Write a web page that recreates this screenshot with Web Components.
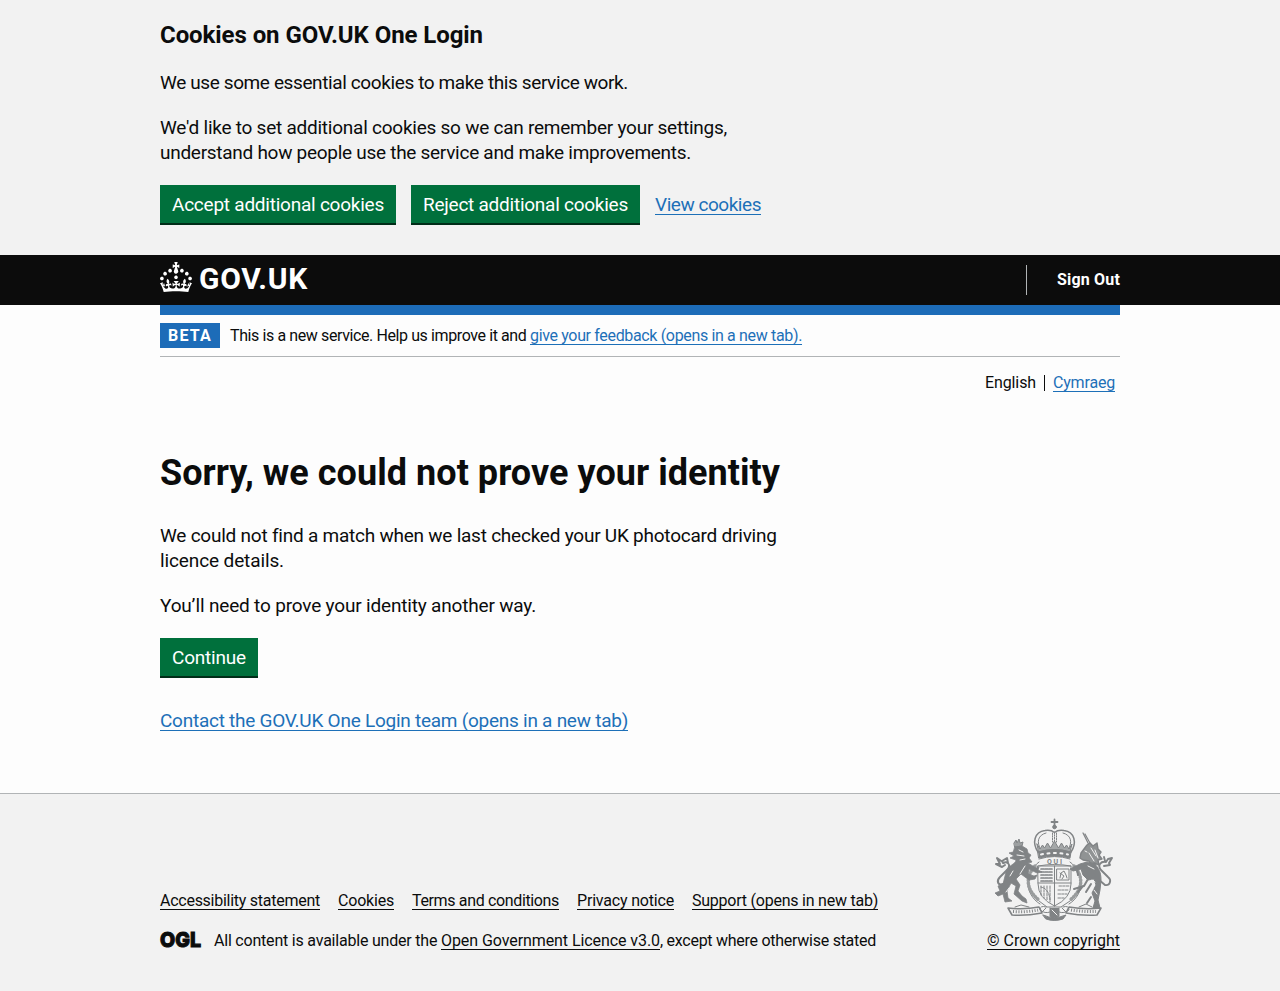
<!DOCTYPE html>
<html lang="en">
<head>
<meta charset="utf-8">
<title>Sorry, we could not prove your identity – GOV.UK One Login</title>
<style>
body{margin:0;background:#fdfdfd;color:#0b0c0c;font-family:Roboto,"Liberation Sans",sans-serif;font-size:19px;line-height:25px}
</style>
</head>
<body>
<one-login-page></one-login-page>
<script>
const define = (name, css, html, ready) => customElements.define(name, class extends HTMLElement {
  constructor() {
    super();
    this.attachShadow({mode: 'open'}).innerHTML = `<style>*{box-sizing:border-box}${css}</style>${html}`;
  }
  connectedCallback() { if (ready) ready.call(this, this.shadowRoot); }
});

// A single line of text, tracked so that it fills the width in its "w" attribute.
define('text-line', `
:host{display:inline-block;white-space:nowrap}
span{display:inline-block}
:host([link]) span{text-decoration:underline;text-decoration-thickness:1px;text-underline-offset:var(--offset,3px);text-decoration-skip-ink:none}
`, `<span><slot></slot></span>`, function (root) {
  const span = root.querySelector('span');
  const target = parseFloat(this.getAttribute('w'));
  const n = this.textContent.length;
  const natural = span.getBoundingClientRect().width;
  if (n && target) {
    span.style.letterSpacing = ((target - natural) / n).toFixed(4) + 'px';
    this.style.width = target + 'px';
  }
});

define('page-width', `:host{display:block;width:960px;margin:0 auto}`, `<slot></slot>`);

define('govuk-button', `
:host{display:block}
button{display:block;border:0;margin:0;padding:7px 12px 6px;height:38px;background:#00703c;color:#fff;font:inherit;line-height:25px;box-shadow:0 2px 0 #002d18}
`, `<button><slot></slot></button>`);

define('cookie-banner', `
:host{display:block;height:255px;background:#f2f2f2;padding-top:20px}
h2{margin:0 0 20px;font-size:24px;line-height:30px;font-weight:700;height:30px}
p{margin:0 0 20px;display:flex;flex-direction:column}
.actions{display:flex;gap:15px;align-items:center}
text-line[link]{color:#1d70b8}
`, `
<page-width>
<h2><text-line w="323">Cookies on GOV.UK One Login</text-line></h2>
<p><text-line w="468">We use some essential cookies to make this service work.</text-line></p>
<p><text-line w="567">We'd like to set additional cookies so we can remember your settings,</text-line>
<text-line w="531">understand how people use the service and make improvements.</text-line></p>
<div class="actions">
<govuk-button><text-line w="212">Accept additional cookies</text-line></govuk-button>
<govuk-button><text-line w="205">Reject additional cookies</text-line></govuk-button>
<text-line link w="106">View cookies</text-line>
</div>
</page-width>`);

define('govuk-logo', `
:host{display:flex;align-items:flex-start;color:#fff}
svg{display:block;width:32px;height:30px;margin-top:7px}
text-line{margin:5px 0 0 7px;font-size:30px;line-height:37px;font-weight:700}
`, `
<svg viewBox="0 0 32 30" fill="currentColor"><path d="M22.6 10.4c-1 .4-2-.1-2.4-1-.4-.9.1-2 1-2.4.9-.4 2 .1 2.4 1s-.1 2-1 2.4m-5.9 6.7c-.9.4-2-.1-2.4-1-.4-.9.1-2 1-2.4.9-.4 2 .1 2.4 1s-.1 2-1 2.4m10.8-3.7c-1 .4-2-.1-2.4-1-.4-.9.1-2 1-2.4.9-.4 2 .1 2.4 1s0 2-1 2.4m3.3 4.8c-1 .4-2-.1-2.4-1-.4-.9.1-2 1-2.4.9-.4 2 .1 2.4 1s-.1 2-1 2.4M17 4.7l2.3 1.2V2.5l-2.3.7-.2-.2.9-3h-3.4l.9 3-.2.2c-.1.1-2.3-.7-2.3-.7v3.4L15 4.7c.1.1.1.2.2.2l-1.3 4c-.1.2-.1.4-.1.6 0 1.1.8 2 1.9 2.2h.7c1-.2 1.9-1.1 1.9-2.1 0-.2 0-.4-.1-.6l-1.3-4c-.1-.2 0-.2.1-.3m-7.6 5.7c.9.4 2-.1 2.4-1 .4-.9-.1-2-1-2.4-.9-.4-2 .1-2.4 1s0 2 1 2.4m-5 3c.9.4 2-.1 2.4-1 .4-.9-.1-2-1-2.4-.9-.4-2 .1-2.4 1s.1 2 1 2.4m-3.2 4.8c.9.4 2-.1 2.4-1 .4-.9-.1-2-1-2.4-.9-.4-2 .1-2.4 1s0 2 1 2.4m14.8 11c4.4 0 8.6.3 12.3.8 1.1-4.5 2.4-7 3.7-8.8l-2.5-.9c.2 1.3.3 1.9 0 2.7-.4-.4-.8-1.1-1.1-2.3l-1.2 4c.7-.5 1.3-.8 2-.9-1.1 2.5-2.6 3.1-3.5 3-1.1-.2-1.7-1.2-1.5-2.1.3-1.2 1.5-1.5 2.1-.1 1.1-2.3-.8-3-2-2.3 1.9-1.9 2.1-3.5.6-5.6-2.1 1.6-2.1 3.2-1.2 5.5-1.2-1.4-3.2-.6-2.5 1.6.9-1.4 2.1-.5 1.9.8-.2 1.1-1.7 2.1-3.5 1.9-2.7-.2-2.9-2.1-2.9-3.6.7-.1 1.9.5 2.9 1.9l.4-4.3c-1.1 1.1-2.1 1.4-3.2 1.4.4-1.2 2.1-3 2.1-3h-5.4s1.7 1.9 2.1 3c-1.1 0-2.1-.2-3.2-1.4l.4 4.3c1-1.4 2.2-2 2.9-1.9-.1 1.5-.2 3.4-2.9 3.6-1.9.2-3.4-.8-3.5-1.9-.2-1.3 1-2.2 1.9-.8.7-2.3-1.2-3-2.5-1.6.9-2.2.9-3.9-1.2-5.5-1.5 2-1.3 3.7.6 5.6-1.2-.7-3.1 0-2 2.3.6-1.4 1.8-1.1 2.1.1.2.9-.3 1.9-1.5 2.1-.9.2-2.4-.5-3.5-3 .6 0 1.2.3 2 .9l-1.2-4c-.3 1.1-.7 1.9-1.1 2.3-.3-.8-.2-1.4 0-2.7l-2.9.9C1.3 23 2.6 25.5 3.7 30c3.7-.5 7.9-.8 12.3-.8"/></svg>
<text-line w="109">GOV.UK</text-line>`);

define('service-header', `
:host{display:block;height:60px;background:linear-gradient(#0c0c0c 50px,transparent 50px)}
.bar{display:flex;justify-content:space-between;height:60px;border-bottom:10px solid #1d6cb8}
nav{display:flex;align-items:center;height:30px;margin-top:10px;padding-left:30px;border-left:1px solid #b1b4b6;color:#fff;font-size:16px;font-weight:700;line-height:30px}
`, `
<page-width><div class="bar"><govuk-logo></govuk-logo><nav><text-line w="63">Sign Out</text-line></nav></div></page-width>`);

define('phase-banner', `
:host{display:flex;align-items:center;height:42px;border-bottom:1px solid #b1b4b6;font-size:16px;line-height:20px}
strong{background:#1d6cb8;color:#fff;width:60px;height:25px;margin-right:10px;padding:0 8px;line-height:26px}
.copy{display:flex}
text-line[link]{color:#1d70b8}
`, `<strong><text-line w="44">BETA</text-line></strong><div class="copy"><text-line w="300">This is a new service. Help us improve it and&nbsp;</text-line><text-line link w="272">give your feedback (opens in a new tab).</text-line></div>`);

define('language-select', `
:host{display:flex;justify-content:flex-end;align-items:center;height:20px;margin:16px 5px 0 0;font-size:16px;line-height:20px}
i{width:1px;height:16px;margin:0 8px;background:#0b0c0c}
text-line[link]{color:#1d70b8}
`, `<text-line w="51">English</text-line><i></i><text-line link w="62">Cymraeg</text-line>`);

define('main-content', `
:host{display:block;padding-top:60px;height:400px}
h1{margin:0 0 30px;height:40px;font-size:36px;line-height:40px;font-weight:700}
p{margin:0 0 20px;display:flex;flex-direction:column}
govuk-button{width:98px;margin-bottom:32px}
text-line[link]{color:#1d70b8}
`, `
<h1><text-line w="620">Sorry, we could not prove your identity</text-line></h1>
<p><text-line w="616">We could not find a match when we last checked your UK photocard driving</text-line><text-line w="124">licence details.</text-line></p>
<p><text-line w="376">You’ll need to prove your identity another way.</text-line></p>
<govuk-button><text-line w="74">Continue</text-line></govuk-button>
<text-line link w="468">Contact the GOV.UK One Login team (opens in a new tab)</text-line>`);

define('royal-arms', `
:host{display:block;width:125px;height:102px}
svg{display:block;width:125px;height:102px;overflow:visible}
`, `
<svg viewBox="0 0 125 102" fill="none" stroke="#808385" stroke-linecap="round" stroke-linejoin="round">
<g id="crown" stroke-width="1">
<path d="M63.500.5v8M60.500 3h6" stroke-width="1.800"/><circle cx="63.500" cy="8" r="1.800" fill="#808385"/>
<path d="M47 33C41 24 43 13 54 11.500q6-1 9.500 2 3.500-3 9.500-2C84 13 86 24 80 33" stroke-width="1.500"/>
<path d="M50 31c-5-8-3-15 5-17M77 31c5-8 3-15-5-17"/><path d="M63.500 13v12M61.500 14v9M65.500 14v9" stroke-dasharray="1.500 1.200"/>
<path d="M46 25l3 5 2.500-4 2 3 3-5 3 5 4-7 4 7 3-5 3 5 2-3 2.500 4 3-5-2 8q-15.500-5-31 0z" fill="#a5a8a9" stroke-width="1"/>
<path d="M47 33q16.500-5 33 0l-1 6q-15.500-4-31 0z" fill="#808385"/><path d="M50 35.500q13.500-3 27 0" stroke="#f2f2f2" stroke-width="2" stroke-dasharray="2 4.500"/>
</g>
<g id="garter" stroke-width="1">
<path d="M48 40q15.500-5 31 0M47 47q16.500-3 33 0"/>
<text x="56" y="44.800" font-family="Roboto" font-size="7" font-weight="700" textLength="15" fill="#808385" stroke="none">QUI</text>
<path d="M48 43c-15 11-15 32 1 42M79 43c15 11 15 32-1 42"/>
<path d="M44 47c-10 11-9 24 4 34M83 47c10 11 9 24-4 34" stroke-width="3.500" stroke-dasharray=".8 2.300" stroke="#999c9d"/>
<path d="M47 47h33v18q0 14-16.500 22Q47 79 47 65zM63.500 47v40M47 64h33"/>
<path d="M50 50h11M50 53h11M50 56h11M50 59h11M50 62h11" stroke-width="1.700" stroke-dasharray="3 1"/>
<path d="M66 50h12v11H66zM69 59l1-5 3-2 2 4 1 3M69 54l4 3-2 3"/>
<path d="M50 67v9M53 67v12M56 67v14M59 67v16M50 68q8 2 9 13M68 67h10M67 71h11M67 75h9M67 79h6" stroke-dasharray="2.500 1.200"/>
<path d="M48 82l8 6h14l9-6M55 88q-6-2-6 3 5 4 10 2M72 88q6-2 6 3-5 4-10 2"/>
<path d="M52 96q11 5 23 0l-3 4q-9 3-17 0zM59 89v8q4 4 9 0v-8" fill="#808385"/><path d="M61 91l5 5" stroke="#f2f2f2"/>
</g>
<g id="lion">
<path d="M23 24l2-3 1 3 2-4 1 4 3-1-1 4-7 1z" stroke-width="1" fill="#9da0a1"/>
<path d="M24 28l7-1 5 3 1 4 3 2-2 3 3 4-4 1 8 5 3-1-1 3 4 2-5 1-8-4-1 5 6 2 3-1-2 4-6 1-8-6-5 5 4 6-2 6 4 5 4 3 1 4-5-2-8-7 2-8-5-3-4 8 1 7 4 3-7 1-2-8-5 2-3-3 5-2-2-5 5-2 3-12c1-6 10-8 10-12l-6-2 4-2-5-3 4-1z" fill="#808385" stroke-width=".8"/>
<path d="M28 31l4 2M26 36l7 1M29 41l5-1M22 52l-3 5M34 47l-5 8M18 69l-3 4" stroke="#f2f2f2" stroke-width="1"/>
<path d="M20 60L12 65c-5 2-7-3-3-7l8-8c3-5-1-8-5-6M13 44l-7-5 3 6-4 0 6 3 3-2M11 42l5-3 1 5" stroke-width="2"/>
</g>
<g id="unicorn">
<path d="M92 14l6 12M94 15l6 11" stroke-width="1.200"/>
<path d="M99 24l3 3 4-3 1 6 3 3-2 3 3 4-4 1 1 5-5-2-2 3-3-5-6-1-3-2 1-5 6-8z" fill="#909394" stroke-width="1.400"/>
<path d="M94 32l2 1M100 29l5 8M98 34l5 8M104 31l3 8" stroke="#f2f2f2"/>
<path d="M96 43l-7 2-10 5 3 2 8-2 2 6 5 5 6-1 2 6-4 8 3 8-2 7h7l-2-8 2-10 1-10c0-9-3-12-6-16z" fill="#808385" stroke-width="1"/>
<path d="M97 60l-4 7-10 3M100 65l-5 8M86 50l1 6M92 67l-5 6M100 78l-4 6M98 49l6 6M105 68l-2 8" stroke-width="2"/>
<path d="M97 47l6 3M101 61l3 2M103 71l3 4" stroke="#f2f2f2"/>
<path d="M107 60l7 6c5 1 7-5 3-8l-7-7c-4-5 0-9 5-8l2-3 4-1-3 5 1 2-6 1M114 42l-1-4" stroke-width="1.900"/>
</g>
<g id="motto" stroke-width="1.600">
<path d="M17 89l4 7q14 1 30-2l-3-6q-15 3-31 1zM110 89l-4 7q-15 1-31-2l3-6q16 3 32 1z"/>
<path d="M22 92.500q13 1 25-1.500M80 91q13 2 25 1.500" stroke-width="3" stroke-linecap="butt" stroke-dasharray="1 1.700"/>
<path d="M51 93l4-4M75 93l-4-4M24 88l6-2 8 2M88 88l7-3 6 3" stroke-width="1"/>
</g>
</svg>`);

define('site-footer', `
:host{display:block;height:198px;background:#f2f2f2;border-top:1px solid #b1b4b6;font-size:16px;line-height:20px}
.row{display:flex;justify-content:space-between;padding-top:25px}
.left{padding-top:72px}
.links{display:flex;gap:18px;margin-bottom:20px}
.licence{display:flex;align-items:center}
svg{display:block;width:41px;height:20px;margin-right:13px;overflow:visible}
.crest{width:133px;display:flex;flex-direction:column}
royal-arms{margin:0 0 10px 4px}
`, `
<page-width><div class="row"><div class="left">
<div class="links"><text-line link w="160">Accessibility statement</text-line><text-line link w="56">Cookies</text-line><text-line link w="147">Terms and conditions</text-line><text-line link w="97">Privacy notice</text-line><text-line link w="186">Support (opens in new tab)</text-line></div>
<div class="licence"><svg viewBox="0 0 41 20"><text x="0" y="16.400" font-family="Inter" font-weight="800" font-size="20.500" textLength="41" lengthAdjust="spacingAndGlyphs" fill="#0b0c0c" stroke="#0b0c0c" stroke-width="1.100">OGL</text></svg><text-line w="227">All content is available under the&nbsp;</text-line><text-line link w="219">Open Government Licence v3.0</text-line><text-line w="216">, except where otherwise stated</text-line></div>
</div><div class="crest"><royal-arms></royal-arms><text-line link w="133">© Crown copyright</text-line></div></div></page-width>`);

define('one-login-page', `:host{display:block}`, `
<cookie-banner></cookie-banner><service-header></service-header>
<page-width><phase-banner></phase-banner><language-select></language-select><main-content></main-content></page-width>
<site-footer></site-footer>`);
</script>
</body>
</html>
